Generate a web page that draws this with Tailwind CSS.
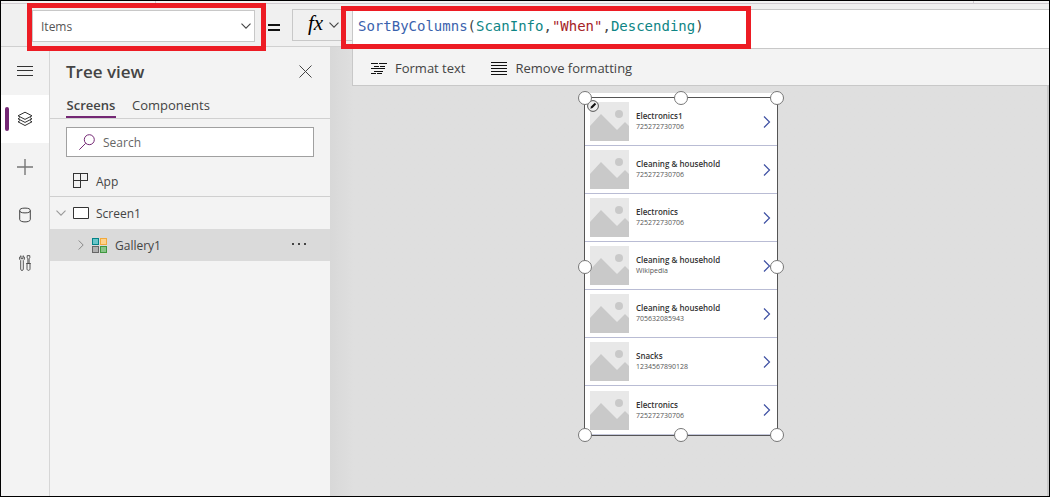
<!DOCTYPE html>
<html lang="en">
<head>
<meta charset="utf-8">
<meta name="viewport" content="width=device-width, initial-scale=1">
<title>Tree view - Gallery1</title>
<script src="https://cdn.jsdelivr.net/npm/@tailwindcss/browser@4"></script>
</head>
<body class="relative flex h-screen flex-col overflow-hidden border border-black bg-[#f3f3f3] font-['Open_Sans','Noto_Sans',sans-serif] text-[#444]">

<svg class="hidden" aria-hidden="true">
  <symbol id="photo" viewBox="0 0 39 39">
    <path fill="#e8e8e8" d="M0 0h39v39H0z"/>
    <path fill="#c9c9c9" d="M0 24 11 12l16 16 8-8 4 4v15H0z"/>
    <circle cx="29" cy="12" r="4" fill="#c9c9c9"/>
  </symbol>
  <symbol id="next" viewBox="0 0 8 12"><path d="M1 .5 6.500 6 1 11.500" fill="none" stroke="#3f51a3" stroke-width="1.200"/></symbol>
  <symbol id="down" viewBox="0 0 10 6"><path d="M.5.7 5 5.200 9.500.7" fill="none" stroke="currentColor" stroke-width="1.100"/></symbol>
</svg>

<div class="flex h-[3px] shrink-0 border-b border-[#d0cbd0]">
  <div class="w-[155px] border-r border-[#d0cbd0]"></div>
  <div class="flex-1"></div>
  <div class="w-[76px] border-l border-[#d0cbd0]"></div>
</div>

<header class="relative z-10 flex h-[43px] shrink-0 items-start border-b border-[#d0d0d0] bg-[#f0f0f0]">
  <div class="relative mt-[6px] ml-[31px] h-8 w-[223px]">
    <select aria-label="Property" class="h-full w-full appearance-none border border-[#c8c8c8] bg-white pt-px pl-2 text-[12px] text-[#555] outline-none"><option>Items</option></select>
    <svg class="pointer-events-none absolute top-[13px] right-1 h-[6px] w-[10px]"><use href="#down"/></svg>
  </div>
  <svg class="mt-[19px] ml-[13px] h-2 w-3 shrink-0" viewBox="0 0 12 8" fill="#111" shape-rendering="crispEdges" role="img" aria-label="equals"><path d="M0 1h12v2H0zM0 6h12v2H0z"/></svg>
  <button aria-label="Insert function" class="mt-[5px] ml-3 flex h-8 w-[60px] shrink-0 items-center border border-r-0 border-[#c8c8c8] pl-[15px]">
    <span class="w-[21px] pb-1 text-left font-['Liberation_Serif',serif] text-[21px] leading-6 text-black italic">fx</span>
    <svg class="h-[6px] w-[10px]"><use href="#down"/></svg>
  </button>
  <section class="mt-[5px] min-w-0 flex-1 border-l border-[#c8c8c8]">
    <div class="h-10 border-y border-[#c8c8c8] bg-white px-[5px] py-[6px]">
      <code class="block font-['DejaVu_Sans_Mono','Liberation_Mono',monospace] text-[14px] leading-5 whitespace-nowrap"><span class="text-[#3a62ad]">SortByColumns</span>(<span class="text-[#0e8585]">ScanInfo</span>,<span class="text-[#a52226]">"When"</span>,<span class="text-[#0e8585]">Descending</span>)</code>
    </div>
    <div class="flex h-[37px] items-center gap-[26px] border-b border-[#c8c8c8] bg-[#f3f3f3] pt-[3px] pl-[18px] text-[13px] text-[#444]">
      <button class="flex items-center gap-2">
        <svg class="h-3 w-4" viewBox="0 0 16 12" stroke="#111" shape-rendering="crispEdges"><path d="M0 .5h7M8 .5h8M3 3.500h5M9 3.500h5M0 5.500h14M3 8.500h9M0 10.500h5M6 10.500h5"/></svg>
        Format text
      </button>
      <button class="flex items-center gap-2">
        <svg class="h-[14px] w-4" viewBox="0 0 16 14" stroke="#111" shape-rendering="crispEdges"><path d="M0 .5h16M0 3.500h16M0 6.500h16M0 9.500h16M0 12.500h16"/></svg>
        Remove formatting
      </button>
    </div>
  </section>
</header>

<div class="flex min-h-0 flex-1">
  <nav aria-label="Main" class="flex w-[49px] shrink-0 flex-col border-r border-[#d6d6d6]">
    <button aria-label="Menu" class="flex h-12 items-center justify-center"><svg class="h-[10px] w-4" viewBox="0 0 16 10" stroke="#333" shape-rendering="crispEdges"><path d="M0 .5h16M0 4.500h16M0 9.500h16"/></svg></button>
    <button aria-label="Tree view" class="flex h-12 items-center bg-white pl-1">
      <span class="h-6 w-1 rounded-full bg-[#742774]"></span>
      <svg class="ml-2 h-4 w-4" viewBox="0 0 16 16" fill="none" stroke="#333"><path d="M8 1.200 15 4.800 8 8.400 1 4.800zM3 6.600 1 7.800l7 3.600 7-3.600-2-1.200M3 9.600 1 10.800l7 3.700 7-3.700-2-1.200"/></svg>
    </button>
    <button aria-label="Insert" class="flex h-12 items-center justify-center"><svg class="h-4 w-4" viewBox="0 0 16 16" stroke="#777" stroke-width="1.400"><path d="M0 8h16M8 0v16"/></svg></button>
    <button aria-label="Data" class="flex h-12 items-center justify-center"><svg class="h-4 w-4" viewBox="0 0 16 16" fill="none" stroke="#444"><ellipse cx="8" cy="3.500" rx="5.300" ry="2.400"/><path d="M2.700 3.500v9c0 3.200 10.600 3.200 10.600 0v-9"/></svg></button>
    <button aria-label="Tools" class="flex h-12 items-center justify-center"><svg class="h-4 w-4" viewBox="0 0 16 16" fill="none" stroke="#444" stroke-width=".9"><path d="M4 .7v3h2v-3c2 1.200 2 3.700.3 4.800v8.700c0 1.700-2.600 1.700-2.600 0V5.500C2 4.400 2 1.900 4 .7zM10.200.6h2.600v2.200l-.7 1v4.700h-1.200V3.800l-.7-1zM9.200 8.500h4.600M10 8.500v5.300c0 2.100 3 2.100 3 0V8.500"/></svg></button>
  </nav>

  <aside class="flex w-[280px] shrink-0 flex-col">
    <div class="flex h-12 items-center justify-between pt-px pr-[18px] pl-4">
      <h1 class="text-[17px] font-semibold text-[#444]">Tree view</h1>
      <button aria-label="Close"><svg class="h-[13px] w-[13px]" viewBox="0 0 13 13" stroke="#444"><path d="m.5.5 12 12m0-12-12 12"/></svg></button>
    </div>
    <div class="flex h-6 items-stretch gap-4 border-b border-[#d0d0d0] pl-4 text-[13px]">
      <button class="w-[50px] border-b-2 border-[#742774] pb-[3px] leading-5 font-semibold whitespace-nowrap">Screens</button>
      <button class="pb-[3px] leading-5">Components</button>
    </div>
    <label class="mt-2 mr-4 ml-4 flex h-[30px] items-center gap-2 border border-[#a0a0a0] bg-white pl-3">
      <svg class="h-4 w-4 shrink-0" viewBox="0 0 16 16" fill="none" stroke="#742774"><circle cx="10.300" cy="5.700" r="5"/><path d="M6.700 9.300.3 15.700"/></svg>
      <input aria-label="Search" placeholder="Search" class="w-full min-w-0 bg-transparent pt-[2px] text-[12px] outline-none placeholder:text-[#666]">
    </label>
    <div role="tree" aria-label="Screens" class="mt-2 text-[12px]">
      <div role="treeitem" class="flex h-8 items-center gap-2 border-b border-[#cfcfcf] pl-[23px]">
        <svg class="h-[15px] w-[15px]" viewBox="0 0 15 15" fill="none" stroke="#333" shape-rendering="crispEdges"><path d="M.5.5h14v7H.5zM.5 7.500v7h7V.5"/></svg><span class="pt-[2px]">App</span>
      </div>
      <div role="treeitem" aria-expanded="true" class="flex h-8 items-center pl-[6px]">
        <svg class="h-[6px] w-[10px] text-[#999]"><use href="#down"/></svg>
        <svg class="mr-[7px] ml-[7px] h-3 w-4" viewBox="0 0 16 12"><path fill="#fff" stroke="#333" d="M.5.5h15v11H.5z"/></svg><span class="pt-[2px]">Screen1</span>
      </div>
      <div role="treeitem" aria-selected="true" class="flex h-8 items-center bg-[#dadada] pr-6 pl-7">
        <svg class="h-[10px] w-[6px]" viewBox="0 0 6 10" fill="none" stroke="#888"><path d="M.7.5 5.200 5 .7 9.500"/></svg>
        <svg class="mr-2 ml-2 h-[15px] w-[15px]" viewBox="0 0 15 15" shape-rendering="crispEdges"><path fill="#69c5c8" stroke="#038387" d="M.5.5h6v6h-6z"/><path fill="#fdd28a" stroke="#f2a93b" d="M8.500.5h6v6h-6z"/><path fill="#b0b0b0" stroke="#666" d="M.5 8.500h6v6h-6z"/><path fill="#88c488" stroke="#3f973f" d="M8.500 8.500h6v6h-6z"/></svg><span class="pt-[2px]">Gallery1</span>
        <button aria-label="More" class="ml-auto"><svg class="h-1 w-[14px]" viewBox="0 0 14 4" fill="#444" shape-rendering="crispEdges"><path d="M0 0h2v2H0zM6 0h2v2H6zM12 0h2v2h-2z"/></svg></button>
      </div>
    </div>
  </aside>

  <main class="min-w-0 flex-1 border-r-2 border-[#cacaca] bg-[#dfdfdf] bg-linear-to-r from-[#d8d8d8] to-[#dfdfdf] to-[24px] pt-[46px]">
    <div class="ml-[254px] w-[194px] bg-white pt-1">
      <div class="relative border border-[#555] bg-white">
        <ul class="divide-y divide-[#b9bcd4] border-b border-[#c5c8db] text-[7px] leading-[10px] text-[#555]">
          <li class="flex h-12 items-center pr-[6px] pl-[5px]"><svg class="h-[39px] w-[39px]"><use href="#photo"/></svg><div class="ml-[7px] flex-1"><p class="mb-px text-[8px] font-semibold text-[#333]">Electronics1</p><p>725272730706</p></div><svg class="h-3 w-2"><use href="#next"/></svg></li>
          <li class="flex h-12 items-center pr-[6px] pl-[5px]"><svg class="h-[39px] w-[39px]"><use href="#photo"/></svg><div class="ml-[7px] flex-1"><p class="mb-px text-[8px] font-semibold text-[#333]">Cleaning &amp; household</p><p>725272730706</p></div><svg class="h-3 w-2"><use href="#next"/></svg></li>
          <li class="flex h-12 items-center pr-[6px] pl-[5px]"><svg class="h-[39px] w-[39px]"><use href="#photo"/></svg><div class="ml-[7px] flex-1"><p class="mb-px text-[8px] font-semibold text-[#333]">Electronics</p><p>725272730706</p></div><svg class="h-3 w-2"><use href="#next"/></svg></li>
          <li class="flex h-12 items-center pr-[6px] pl-[5px]"><svg class="h-[39px] w-[39px]"><use href="#photo"/></svg><div class="ml-[7px] flex-1"><p class="mb-px text-[8px] font-semibold text-[#333]">Cleaning &amp; household</p><p>Wikipedia</p></div><svg class="h-3 w-2"><use href="#next"/></svg></li>
          <li class="flex h-12 items-center pr-[6px] pl-[5px]"><svg class="h-[39px] w-[39px]"><use href="#photo"/></svg><div class="ml-[7px] flex-1"><p class="mb-px text-[8px] font-semibold text-[#333]">Cleaning &amp; household</p><p>705632085943</p></div><svg class="h-3 w-2"><use href="#next"/></svg></li>
          <li class="flex h-12 items-center pr-[6px] pl-[5px]"><svg class="h-[39px] w-[39px]"><use href="#photo"/></svg><div class="ml-[7px] flex-1"><p class="mb-px text-[8px] font-semibold text-[#333]">Snacks</p><p>1234567890128</p></div><svg class="h-3 w-2"><use href="#next"/></svg></li>
          <li class="flex h-12 items-center pr-[6px] pl-[5px]"><svg class="h-[39px] w-[39px]"><use href="#photo"/></svg><div class="ml-[7px] flex-1"><p class="mb-px text-[8px] font-semibold text-[#333]">Electronics</p><p>725272730706</p></div><svg class="h-3 w-2"><use href="#next"/></svg></li>
        </ul>
        <button aria-label="Edit gallery" class="absolute top-[2px] left-[2px]"><svg class="h-3 w-3" viewBox="0 0 12 12"><circle cx="6" cy="6" r="5.400" fill="#eee" stroke="#555"/><path d="m3.300 8.700.7-2.200L7.800 2.800 9.200 4.200 5.500 8z" fill="#111"/></svg></button>
        <!-- Resize handles -->
        <span class="absolute -top-[7px] -left-[7px] size-[14px] rounded-full border border-[#777] bg-white"></span>
        <span class="absolute -top-[7px] left-1/2 size-[14px] -translate-x-1/2 rounded-full border border-[#777] bg-white"></span>
        <span class="absolute -top-[7px] -right-[7px] size-[14px] rounded-full border border-[#777] bg-white"></span>
        <span class="absolute top-1/2 -left-[7px] size-[14px] -translate-y-1/2 rounded-full border border-[#777] bg-white"></span>
        <span class="absolute top-1/2 -right-[7px] size-[14px] -translate-y-1/2 rounded-full border border-[#777] bg-white"></span>
        <span class="absolute -bottom-[7px] -left-[7px] size-[14px] rounded-full border border-[#777] bg-white"></span>
        <span class="absolute -bottom-[7px] left-1/2 size-[14px] -translate-x-1/2 rounded-full border border-[#777] bg-white"></span>
        <span class="absolute -right-[7px] -bottom-[7px] size-[14px] rounded-full border border-[#777] bg-white"></span>
      </div>
    </div>
  </main>
</div>

<!-- Highlight annotations -->
<div class="pointer-events-none absolute top-[2px] left-[26px] z-20 h-12 w-[239px] border-5 border-[#ed1c24]"></div>
<div class="pointer-events-none absolute top-[5px] left-[340px] z-20 h-[43px] w-[410px] border-5 border-[#ed1c24]"></div>
</body>
</html>
